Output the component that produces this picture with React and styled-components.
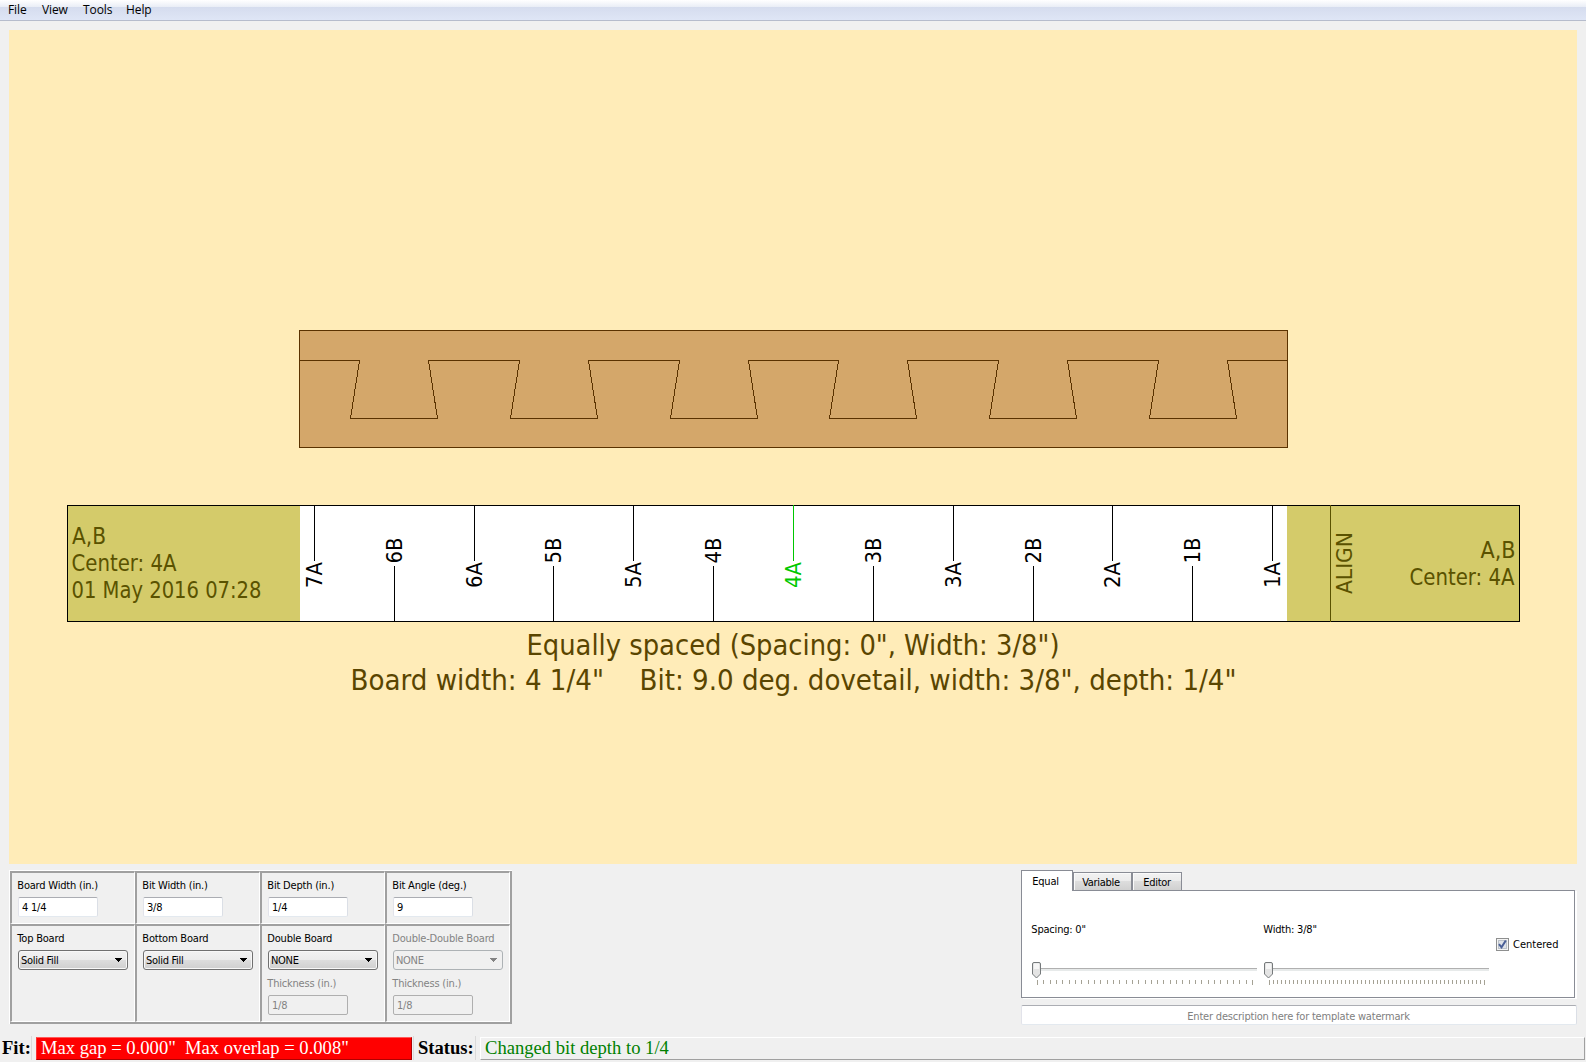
import React from "react";
import styled, { createGlobalStyle, css } from "styled-components";

const ui = '"DejaVu Sans Condensed", "DejaVu Sans", "Noto Sans", sans-serif';

const GlobalStyle = createGlobalStyle`
  * { box-sizing: border-box; }
  body { margin: 0; background: #f0f0f0; }
`;

const Window = styled.div`
  width: 1586px;
  height: 1062px;
  display: flex;
  flex-direction: column;
  background: #f0f0f0;
  overflow: hidden;
  font-family: ${ui};
  font-stretch: condensed;
  font-size: 11px;
  letter-spacing: -0.22px;
  color: #000;
`;

const MenuBar = styled.nav`
  height: 21px;
  flex: none;
  display: flex;
  align-items: center;
  gap: 16px;
  padding: 0 0 2px 8px;
  border-bottom: 1px solid #b6bccc;
  background: linear-gradient(#ffffff 0, #e9edf6 7px, #d5dcee 7px, #dfe6f6 100%);
  font-family: "Open Sans", "Noto Sans", sans-serif;
  font-stretch: normal;
  font-size: 12px;
  letter-spacing: -0.1px;
`;

const MenuItem = styled.span`
  width: ${(p) => p.$w}px;
  white-space: nowrap;
`;

const Canvas = styled.div`
  flex: none;
  margin: 9px 9px 6px;
  height: 834px;
  background: #ffecb8;
  svg { display: block; }
`;

const Controls = styled.div`
  flex: none;
  height: 155px;
  display: flex;
  justify-content: space-between;
  padding: 0 9px;
`;

const ParamGrid = styled.div`
  width: 503px;
  height: 154px;
  display: grid;
  grid-template-columns: repeat(4, 125px);
  grid-template-rows: 53px 98px;
  border: solid #fff;
  border-width: 1px 0 0 1px;
  box-shadow: inset -2px -2px 0 #a0a0a0;
`;

const Cell = styled.div`
  border: solid;
  border-width: 2px 1px 1px 2px;
  border-color: #a0a0a0 #fff #fff #a0a0a0;
  padding: 6px 0 0 6px;
  display: flex;
  flex-direction: column;
  align-items: flex-start;
`;

const Label = styled.label`
  height: 14px;
  line-height: 14px;
  margin: 0 0 4px -0.7px;
  white-space: pre;
  color: ${(p) => (p.$off ? "#838383" : "#000")};
  letter-spacing: -0.2px;
`;

const TextField = styled.div`
  width: 80px;
  height: 20px;
  padding: 1px 0 0 3px;
  line-height: 18px;
  border: 1px solid;
  border-radius: 2px;
  ${(p) =>
    p.$off
      ? css`
          border-color: #afafaf;
          background: #f0f0f0;
          color: #838383;
        `
      : css`
          border-color: #abadb3 #dbdfe6 #e3e9ef #e2e3ea;
          background: #fff;
        `}
`;

const Combo = styled.div`
  width: 110px;
  height: 20px;
  margin-bottom: 7px;
  padding: 0 5px 0 2px;
  display: flex;
  align-items: center;
  justify-content: space-between;
  border: 1px solid ${(p) => (p.$off ? "#adb2b5" : "#707070")};
  border-radius: 3px;
  letter-spacing: -0.3px;
  color: ${(p) => (p.$off ? "#838383" : "#000")};
  background: ${(p) =>
    p.$off ? "#f0f0f0" : "linear-gradient(#f2f2f2 0, #ebebeb 50%, #dddddd 50%, #cfcfcf 100%)"};
  box-shadow: ${(p) => (p.$off ? "none" : "inset 0 0 0 1px #f8f8f8")};
  svg { display: block; }
`;

const RightPane = styled.div`
  width: 556px;
  display: flex;
  flex-direction: column;
`;

const Tabs = styled.div`
  height: 20px;
  display: flex;
  align-items: flex-end;
`;

const Tab = styled.div`
  width: ${(p) => p.$w}px;
  text-align: center;
  border: 1px solid #898c95;
  border-bottom: 0;
  ${(p) =>
    p.$active
      ? css`
          height: 21px;
          margin-bottom: -1px;
          line-height: 22px;
          padding-right: 3px;
          background: #fff;
          position: relative;
          z-index: 1;
        `
      : css`
          height: 18px;
          line-height: 19px;
          padding-right: ${p.$shift || 0}px;
          letter-spacing: -0.3px;
          box-shadow: inset 1px 1px 0 #fafafa;
          background: linear-gradient(#f2f2f2 0, #ebebeb 50%, #dddddd 50%, #d0d0d0 100%);
        `}
`;

const TabPanel = styled.div`
  width: 554px;
  height: 108px;
  padding: 0 14px 0 10px;
  display: flex;
  align-items: center;
  background: #fff;
  border: 1px solid #898c95;
  box-shadow: 2px 1px 0 #fff;
`;

const SliderBlock = styled.div`
  width: ${(p) => p.$w}px;
  height: 106px;
  padding-top: 32px;
  display: flex;
  flex-direction: column;
  svg { display: block; }
`;

const SliderLabel = styled.span`
  line-height: 14px;
  height: 39px;
  margin-left: -0.7px;
  letter-spacing: -0.2px;
`;

const Check = styled.label`
  display: flex;
  align-items: center;
  gap: 4px;
  height: 13px;
  line-height: 15px;
  letter-spacing: 0;
  white-space: nowrap;
`;

const Watermark = styled.div`
  margin-top: 7px;
  height: 20px;
  padding-right: 1px;
  line-height: 21px;
  text-align: center;
  color: #808080;
  background: #fff;
  border: 1px solid;
  border-color: #abadb3 #dbdfe6 #e3e9ef #e2e3ea;
  border-radius: 2px;
  letter-spacing: -0.2px;
`;

const StatusBar = styled.footer`
  flex: none;
  margin-top: 11px;
  height: 25px;
  display: flex;
  align-items: flex-start;
  font-family: "Liberation Serif", "Times New Roman", serif;
  font-stretch: normal;
  font-size: 18.6px;
  letter-spacing: 0;
  line-height: 22px;
  white-space: pre;
`;

const StatusTitle = styled.b`
  width: ${(p) => p.$w}px;
  height: 24px;
  padding-left: ${(p) => p.$pad}px;
  padding-top: 1px;
  border-right: 1px solid #dadada;
`;

const StatusBox = styled.div`
  width: ${(p) => p.$w}px;
  height: 23px;
  margin: 1px 1px 0 4px;
  padding-left: 4px;
  line-height: 20px;
  border: 1px solid;
  border-color: ${(p) => (p.$alert ? "#ff5a5a #b00000 #b00000 #ff3030" : "#fff #a0a0a0 #a0a0a0 #fff")};
  background: ${(p) => (p.$alert ? "#ff0000" : "#f0f0f0")};
  color: ${(p) => (p.$alert ? "#fff" : "#008000")};
`;

const Divider = styled.i`
  width: 1px;
  height: 24px;
  background: #dadada;
`;

const Arrow = ({ off }) => (
  <svg width="7" height="4" viewBox="0 0 7 4" shapeRendering="crispEdges">
    <path d="M0 0H7L3.500 4Z" fill={off ? "#838383" : "#000"} />
  </svg>
);

const Slider = ({ step, count, width }) => (
  <svg width={width} height="26" viewBox={`0 0 ${width} 26`}>
    <g shapeRendering="crispEdges">
      <rect x="0" y="6" width="225" height="1" fill="#b0b0b0" />
      <rect x="0" y="7" width="225" height="2" fill="#e7eaea" />
      {Array.from({ length: count + 1 }, (_, i) => (
        <rect
          key={i}
          x={Math.round(5 + i * step)}
          y="18"
          width="1"
          height={i === 0 || i === count ? 5 : 4}
          fill="#a5a295"
        />
      ))}
    </g>
    <path
      d="M2 .5H7Q8.500 .5 8.500 2V12L4.500 16L.5 12V2Q.5 .5 2 .5Z"
      fill="#e4e4e4"
      stroke="#75797b"
    />
    <path d="M2 1.500H7V7H2Z" fill="#f6f6f6" />
  </svg>
);

const DARK = "#5a4500";
const OLIVE = "#5a5200";
const topMarks = [314, 474, 633, 793, 953, 1112, 1272];
const bottomMarks = [394, 553, 713, 873, 1033, 1192];
const tails = [0, 160, 320, 479, 639, 799];

const Txt = ({ x, y, len, size = 22.67, fill, children }) => (
  <text
    x={x}
    y={y}
    fontSize={size}
    fill={fill}
    textLength={len}
    lengthAdjust="spacingAndGlyphs"
    xmlSpace="preserve"
  >
    {children}
  </text>
);

const Turned = ({ x, y, len, fill, children }) => (
  <g transform={`translate(${x} ${y}) rotate(-90)`}>
    <Txt x={0} y={0} len={len} size={22} fill={fill}>{children}</Txt>
  </g>
);

const Drawing = () => (
  <svg width="1568" height="834" viewBox="9 30 1568 834" fontFamily={ui} letterSpacing="0">
    <g fill="none" stroke="#5a3200">
      <rect x="299.500" y="330.500" width="988" height="117" fill="#d4a76a" shapeRendering="crispEdges" />
      <path
        shapeRendering="crispEdges"
        d={
          "M299.500 360.500" +
          tails
            .map((t) => `H${359.5 + t}L${350.5 + t} 418.500H${437.5 + t}L${428.5 + t} 360.500`)
            .join("") +
          "H1287.500"
        }
      />
    </g>
    <g shapeRendering="crispEdges">
      <rect x="67.500" y="505.500" width="1452" height="116" fill="#fff" stroke="none" />
      <rect x="68" y="506" width="232" height="115" fill="#d4cb6a" />
      <rect x="1287" y="506" width="232" height="115" fill="#d4cb6a" />
      <rect x="67.500" y="505.500" width="1452" height="116" fill="none" stroke="#000" />
      <rect x="1330" y="505" width="1" height="117" fill={OLIVE} />
      {topMarks.map((x) => (
        <rect key={x} x={x} y="505" width="1" height="56" fill={x === 793 ? "#00c800" : "#000"} />
      ))}
      {bottomMarks.map((x) => (
        <rect key={x} x={x} y="566" width="1" height="56" />
      ))}
    </g>
    {topMarks.map((x, i) => (
      <Turned key={x} x={x + 8} y={588} len={26} fill={x === 793 ? "#00c800" : "#000"}>
        {`${7 - i}A`}
      </Turned>
    ))}
    {bottomMarks.map((x, i) => (
      <Turned key={x} x={x + 8} y={563.5} len={26}>{`${6 - i}B`}</Turned>
    ))}
    <Turned x={1352} y={594} len={62} fill={OLIVE}>ALIGN</Turned>
    <Txt x={72} y={543.5} len={34} fill={OLIVE}>A,B</Txt>
    <Txt x={71.5} y={570.5} len={105} fill={OLIVE}>Center: 4A</Txt>
    <Txt x={71.5} y={597.5} len={190} fill={OLIVE}>01 May 2016 07:28</Txt>
    <Txt x={1480.5} y={558} len={35} fill={OLIVE}>A,B</Txt>
    <Txt x={1409.5} y={585} len={105} fill={OLIVE}>Center: 4A</Txt>
    <Txt x={526.5} y={655} len={533} size={29} fill={DARK}>{'Equally spaced (Spacing: 0", Width: 3/8")'}</Txt>
    <Txt x={350.5} y={690} len={253.5} size={29} fill={DARK}>{'Board width: 4 1/4"'}</Txt>
    <Txt x={639.5} y={690} len={597} size={29} fill={DARK}>
      {'Bit: 9.0 deg. dovetail, width: 3/8", depth: 1/4"'}
    </Txt>
  </svg>
);

const params = [
  ["Board Width (in.)", "4 1/4"],
  ["Bit Width (in.)", "3/8"],
  ["Bit Depth (in.)", "1/4"],
  ["Bit Angle (deg.)", "9"],
];

const boards = [
  { label: "Top Board", value: "Solid Fill" },
  { label: "Bottom Board", value: "Solid Fill" },
  { label: "Double Board", value: "NONE", thickness: "1/8" },
  { label: "Double-Double Board", value: "NONE", thickness: "1/8", off: true },
];

export default function App() {
  return (
    <Window>
      <GlobalStyle />
      <MenuBar>
        <MenuItem $w={18}>File</MenuItem>
        <MenuItem $w={25}>View</MenuItem>
        <MenuItem $w={27}>Tools</MenuItem>
        <MenuItem $w={25}>Help</MenuItem>
      </MenuBar>
      <Canvas>
        <Drawing />
      </Canvas>
      <Controls>
        <ParamGrid>
          {params.map(([label, value]) => (
            <Cell key={label}>
              <Label>{label}</Label>
              <TextField>{value}</TextField>
            </Cell>
          ))}
          {boards.map((b) => (
            <Cell key={b.label}>
              <Label $off={b.off}>{b.label}</Label>
              <Combo $off={b.off}>
                {b.value}
                <Arrow off={b.off} />
              </Combo>
              {b.thickness && (
                <>
                  <Label $off>Thickness (in.)</Label>
                  <TextField $off>{b.thickness}</TextField>
                </>
              )}
            </Cell>
          ))}
        </ParamGrid>
        <RightPane>
          <Tabs>
            <Tab $w={52} $active>Equal</Tab>
            <Tab $w={59} $shift={3}>Variable</Tab>
            <Tab $w={50}>Editor</Tab>
          </Tabs>
          <TabPanel>
            <SliderBlock $w={232}>
              <SliderLabel>Spacing: 0"</SliderLabel>
              <Slider width={226} step={215 / 34} count={34} />
            </SliderBlock>
            <SliderBlock $w={232}>
              <SliderLabel>Width: 3/8"</SliderLabel>
              <Slider width={226} step={215 / 54} count={54} />
            </SliderBlock>
            <Check>
              <svg width="13" height="13" viewBox="0 0 13 13">
                <rect x=".5" y=".5" width="12" height="12" fill="#f4f4f4" stroke="#8e8f8f" />
                <rect x="2.500" y="2.500" width="8" height="8" fill="#dfe3e8" stroke="#bcc2ca" />
                <path d="M3 6.200L5.500 9.300L9.800 2.500" fill="none" stroke="#4a5f97" strokeWidth="2" />
              </svg>
              Centered
            </Check>
          </TabPanel>
          <Watermark>Enter description here for template watermark</Watermark>
        </RightPane>
      </Controls>
      <StatusBar>
        <StatusTitle $w={32} $pad={2}>Fit:</StatusTitle>
        <StatusBox $w={376} $alert>{'Max gap = 0.000"  Max overlap = 0.008"'}</StatusBox>
        <Divider />
        <StatusTitle $w={62} $pad={4}>Status:</StatusTitle>
        <StatusBox $w={1105}>Changed bit depth to 1/4</StatusBox>
      </StatusBar>
    </Window>
  );
}
